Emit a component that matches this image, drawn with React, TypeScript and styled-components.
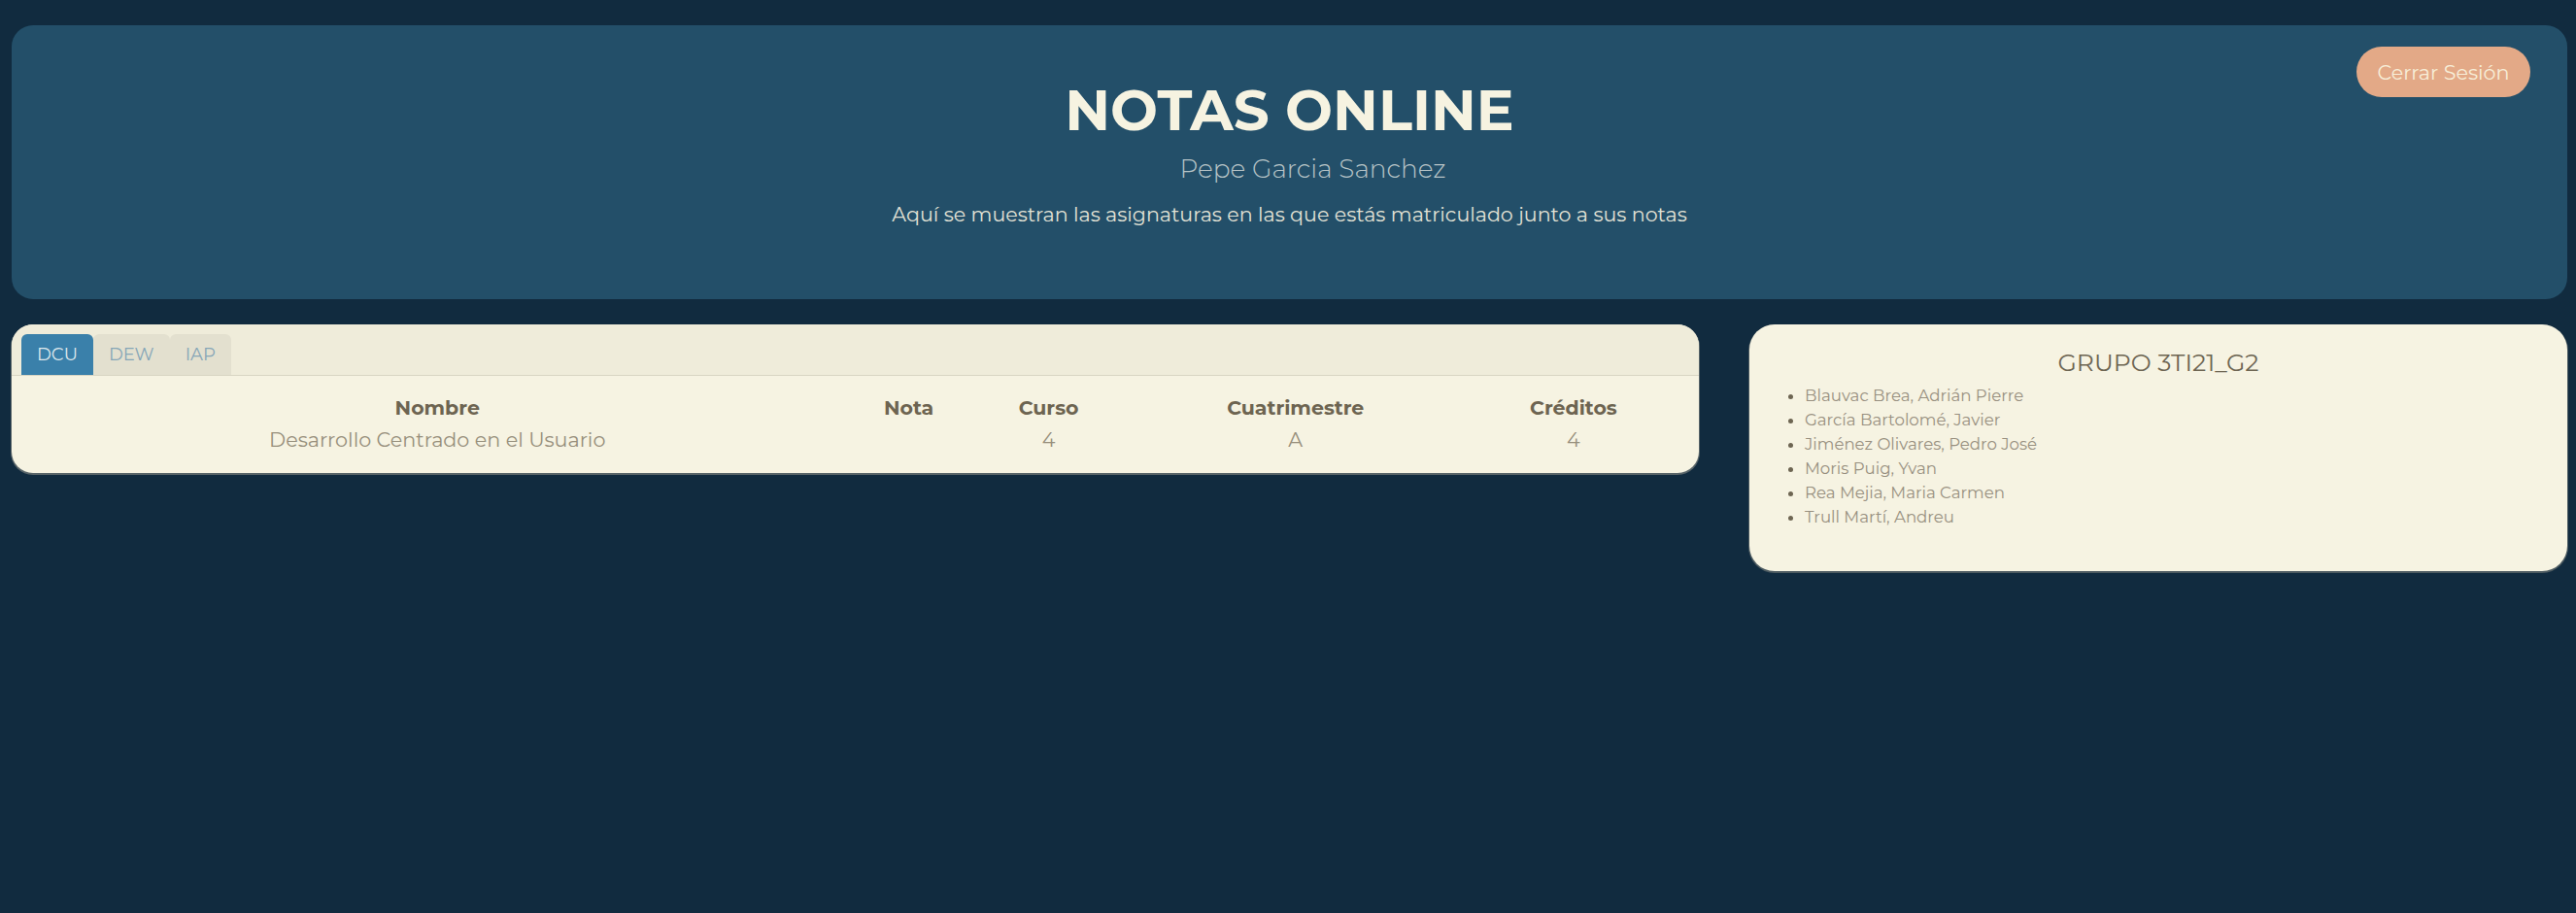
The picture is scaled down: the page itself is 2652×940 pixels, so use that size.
import React from "react";
import styled, { createGlobalStyle } from "styled-components";

const GlobalStyle = createGlobalStyle`
  html, body {
    margin: 0;
    padding: 0;
    background: #112b3f;
  }
  * { box-sizing: border-box; }
  body {
    font-family: Montserrat, Inter, "Open Sans", sans-serif;
  }
`;

const Page = styled.div`
  min-height: 940px;
  background: #112b3f;
  padding: 26px 9px 20px 12px;
`;

const Header = styled.header`
  position: relative;
  height: 282px;
  background: #234f69;
  border-radius: 22px;
  padding-top: 59px;
  display: flex;
  flex-direction: column;
  align-items: center;
`;

const Title = styled.h1`
  margin: 0;
  font-size: 58px;
  line-height: 1;
  font-weight: 700;
  color: #f6f3e1;
`;

const UserName = styled.h2`
  margin: 18px 0 0 48px;
  font-size: 26.4px;
  line-height: 1;
  font-weight: 300;
  color: #b6c3c6;
`;

const Intro = styled.p`
  margin: 24px 0 0;
  font-size: 20.6px;
  line-height: 1;
  font-weight: 400;
  color: #e2e2d6;
`;

const LogoutButton = styled.button`
  position: absolute;
  top: 22px;
  right: 38px;
  width: 179px;
  height: 52px;
  border: none;
  border-radius: 26px;
  background: #e3a987;
  color: #f7eed8;
  font-family: inherit;
  font-size: 20.7px;
  font-weight: 400;
  display: flex;
  align-items: center;
  justify-content: center;
  cursor: pointer;
`;

const Content = styled.main`
  margin-top: 26px;
  display: grid;
  grid-template-columns: 1737px 1fr;
  gap: 52px;
  align-items: start;
`;

const Card = styled.section`
  background: #f6f3e2;
  border-radius: 22px;
  overflow: hidden;
  box-shadow: 0 1px 0 1px rgba(150, 150, 140, 0.55);
`;

const TabBar = styled.div`
  display: flex;
  background: #efecda;
  padding: 10px 10px 0;
  border-bottom: 1px solid #d9d6c4;
`;

const Tab = styled.button<{ $active?: boolean }>`
  height: 42px;
  padding: 0 16px;
  border: none;
  border-radius: 6px 6px 0 0;
  font-family: inherit;
  font-size: 18px;
  font-weight: 400;
  background: ${(p) => (p.$active ? "#3a80aa" : "#e3e0cf")};
  color: ${(p) => (p.$active ? "#dfe8ec" : "#86a6b7")};
  cursor: pointer;
`;

const Table = styled.div`
  padding: 21px 10px 22px;
  display: grid;
  grid-template-columns: 856fr 114fr 174fr 334fr 238fr;
  row-gap: 9px;
  text-align: center;
`;

const HeadCell = styled.div`
  font-size: 20.5px;
  line-height: 24px;
  font-weight: 700;
  color: #6d6451;
`;

const Cell = styled.div`
  font-size: 20.7px;
  line-height: 24px;
  font-weight: 400;
  color: #978f7c;
`;

const GroupCard = styled.section`
  background: #f6f3e2;
  border-radius: 26px;
  padding: 27px 20px 43px;
  box-shadow: 0 1px 0 1px rgba(150, 150, 140, 0.45);
`;

const GroupTitle = styled.h3`
  margin: 0;
  text-align: center;
  font-size: 25px;
  line-height: 1;
  font-weight: 400;
  color: #6d6552;
`;

const MemberList = styled.ul`
  margin: 9px 0 0;
  padding-left: 37px;
  list-style: disc;
`;

const Member = styled.li`
  font-size: 16.6px;
  line-height: 25px;
  color: #989080;
  &::marker {
    color: #6d6552;
  }
`;

const subjects = ["DCU", "DEW", "IAP"];
const members = [
  "Blauvac Brea, Adrián Pierre",
  "García Bartolomé, Javier",
  "Jiménez Olivares, Pedro José",
  "Moris Puig, Yvan",
  "Rea Mejia, Maria Carmen",
  "Trull Martí, Andreu",
];

export default function App() {
  return (
    <>
      <GlobalStyle />
      <Page>
        <Header>
          <Title>NOTAS ONLINE</Title>
          <UserName>Pepe Garcia Sanchez</UserName>
          <Intro>Aquí se muestran las asignaturas en las que estás matriculado junto a sus notas</Intro>
          <LogoutButton>Cerrar Sesión</LogoutButton>
        </Header>
        <Content>
          <Card>
            <TabBar>
              {subjects.map((s, i) => (
                <Tab key={s} $active={i === 0}>
                  {s}
                </Tab>
              ))}
            </TabBar>
            <Table>
              <HeadCell>Nombre</HeadCell>
              <HeadCell>Nota</HeadCell>
              <HeadCell>Curso</HeadCell>
              <HeadCell>Cuatrimestre</HeadCell>
              <HeadCell>Créditos</HeadCell>
              <Cell>Desarrollo Centrado en el Usuario</Cell>
              <Cell></Cell>
              <Cell>4</Cell>
              <Cell>A</Cell>
              <Cell>4</Cell>
            </Table>
          </Card>
          <GroupCard>
            <GroupTitle>GRUPO 3TI21_G2</GroupTitle>
            <MemberList>
              {members.map((m) => (
                <Member key={m}>{m}</Member>
              ))}
            </MemberList>
          </GroupCard>
        </Content>
      </Page>
    </>
  );
}
